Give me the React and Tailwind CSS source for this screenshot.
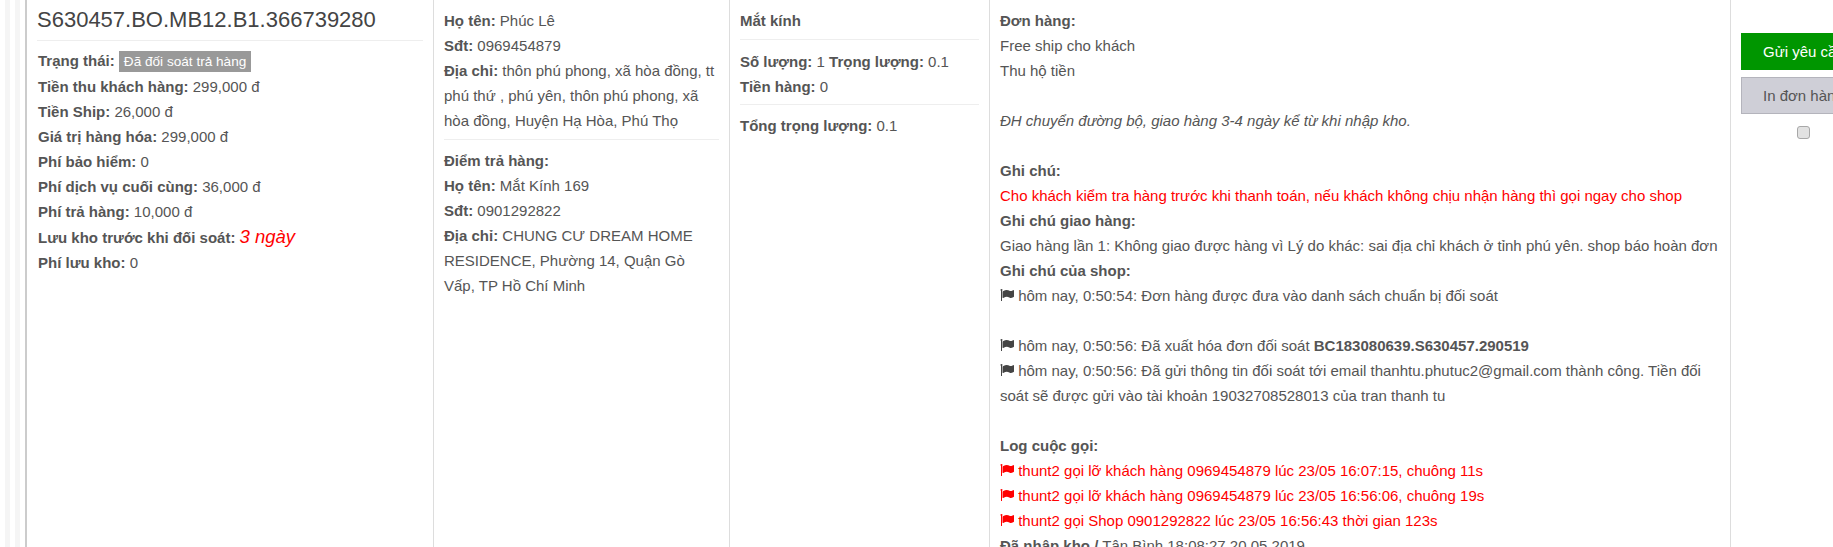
import React from "react";

// one bold label + value line
function Row({ label, children }) {
  return (
    <div>
      <b className="font-bold">{label}</b> {children}
    </div>
  );
}

// old font-awesome flag, thin pole and waving cloth
function FlagIcon({ className }) {
  return (
    <svg viewBox="0 0 1792 1792" fill="currentColor" className={className}>
      <path d="M320 256q0 72-64 110v1266q0 13-9.5 22.5t-22.5 9.5h-64q-13 0-22.5-9.5t-9.5-22.5v-1266q-64-38-64-110 0-53 37.5-90.5t90.5-37.5 90.5 37.5 37.5 90.5zm1472 64v763q0 25-12.5 38.5t-39.5 27.5q-215 116-369 116-61 0-123.5-22t-108.5-48-115.5-48-142.5-22q-192 0-464 146-17 9-33 9-26 0-45-19t-19-45v-742q0-32 31-55 21-14 79-43 236-120 421-120 107 0 200 29t219 88q38 19 88 19 54 0 117.5-21t110-47 88-47 54.5-21q26 0 45 19t19 45z" />
    </svg>
  );
}

function FlagLine({ children, red }) {
  return (
    <div className={red ? "text-[#ff0000]" : ""}>
      <FlagIcon className={`inline-block w-[14px] h-[14px] align-[-1px] ${red ? "text-[#ff0000]" : "text-[#444]"}`} /> {children}
    </div>
  );
}

const Hr = ({ className = "" }) => <div className={`border-t border-[#eeeeee] ${className}`} />;

export default function App() {
  return (
    <div
      className="w-[1833px] h-[547px] overflow-hidden bg-white text-[15px] leading-[25px] text-[#555]"
      style={{ fontFamily: '"Liberation Sans", Arial, sans-serif' }}
    >
      <div className="flex w-[1900px] h-full">
        {/* nested row borders on the left */}
        <div className="w-[25px] shrink-0 h-full bg-[repeating-linear-gradient(90deg,#ffffff_0px,#ffffff_5px,#f5f5f5_5px,#f5f5f5_10px)]" />

        <div className="w-[409px] shrink-0 border-l-2 border-[#cccccc] border-r border-r-[#dddddd] pl-[10px] pr-[10px]">
          <h3 className="text-[22px] leading-[24px] pt-[8px] pb-[8px] text-[#444] border-b border-[#eeeeee] font-normal">
            S630457.BO.MB12.B1.366739280
          </h3>
          <div className="pt-[7px] pl-[1px]">
            <div>
              <b className="font-bold">Trạng thái:</b>{" "}
              <span className="bg-[#999999] text-white text-[13.6px] px-[5px] py-[3px]">Đã đối soát trả hàng</span>
            </div>
            <Row label="Tiền thu khách hàng:">299,000 đ</Row>
            <Row label="Tiền Ship:">26,000 đ</Row>
            <Row label="Giá trị hàng hóa:">299,000 đ</Row>
            <Row label="Phí bảo hiểm:">0</Row>
            <Row label="Phí dịch vụ cuối cùng:">36,000 đ</Row>
            <Row label="Phí trả hàng:">10,000 đ</Row>
            <Row label="Lưu kho trước khi đối soát:">
              <i className="text-[#ff0000] text-[18.5px]">3 ngày</i>
            </Row>
            <Row label="Phí lưu kho:">0</Row>
          </div>
        </div>

        <div className="w-[296px] shrink-0 border-r border-[#dddddd] px-[10px] pt-[8px]">
          <Row label="Họ tên:">Phúc Lê</Row>
          <Row label="Sđt:">0969454879</Row>
          <Row label="Địa chỉ:">thôn phú phong, xã hòa đồng, tt phú thứ , phú yên, thôn phú phong, xã hòa đồng, Huyện Hạ Hòa, Phú Thọ</Row>
          <Hr className="mt-[6px] mb-[8px]" />
          <div><b className="font-bold">Điểm trả hàng:</b></div>
          <Row label="Họ tên:">Mắt Kính 169</Row>
          <Row label="Sđt:">0901292822</Row>
          <Row label="Địa chỉ:">CHUNG CƯ DREAM HOME RESIDENCE, Phường 14, Quận Gò Vấp, TP Hồ Chí Minh</Row>
        </div>

        <div className="w-[260px] shrink-0 border-r border-[#dddddd] px-[10px] pt-[8px]">
          <div className="font-bold">Mắt kính</div>
          <Hr className="mt-[6px] mb-[9px]" />
          <div>
            <b className="font-bold">Số lượng:</b> 1 <b className="font-bold">Trọng lượng:</b> 0.1
          </div>
          <Row label="Tiền hàng:">0</Row>
          <Hr className="mt-[5px] mb-[8px]" />
          <Row label="Tổng trọng lượng:">0.1</Row>
        </div>

        <div className="w-[741px] shrink-0 border-r border-[#dddddd] px-[10px] pt-[8px]">
          <div className="font-bold">Đơn hàng:</div>
          <div>Free ship cho khách</div>
          <div>Thu hộ tiền</div>
          <br />
          <div className="italic">ĐH chuyển đường bộ, giao hàng 3-4 ngày kể từ khi nhập kho.</div>
          <br />
          <div className="font-bold">Ghi chú:</div>
          <div className="text-[#ff0000]">Cho khách kiểm tra hàng trước khi thanh toán, nếu khách không chịu nhận hàng thì gọi ngay cho shop</div>
          <div className="font-bold">Ghi chú giao hàng:</div>
          <div>Giao hàng lần 1: Không giao được hàng vì Lý do khác: sai địa chỉ khách ở tỉnh phú yên. shop báo hoàn đơn</div>
          <div className="font-bold">Ghi chú của shop:</div>
          <FlagLine>hôm nay, 0:50:54: Đơn hàng được đưa vào danh sách chuẩn bị đối soát</FlagLine>
          <br />
          <FlagLine>
            hôm nay, 0:50:56: Đã xuất hóa đơn đối soát <b className="font-bold">BC183080639.S630457.290519</b>
          </FlagLine>
          <FlagLine>
            hôm nay, 0:50:56: Đã gửi thông tin đối soát tới email thanhtu.phutuc2@gmail.com thành công. Tiền đối soát sẽ được gửi vào tài khoản 19032708528013 của tran thanh tu
          </FlagLine>
          <br />
          <div className="font-bold">Log cuộc gọi:</div>
          <FlagLine red>thunt2 gọi lỡ khách hàng 0969454879 lúc 23/05 16:07:15, chuông 11s</FlagLine>
          <FlagLine red>thunt2 gọi lỡ khách hàng 0969454879 lúc 23/05 16:56:06, chuông 19s</FlagLine>
          <FlagLine red>thunt2 gọi Shop 0901292822 lúc 23/05 16:56:43 thời gian 123s</FlagLine>
          <div>
            <b className="font-bold">Đã nhập kho /</b> Tân Bình 18:08:27 20.05.2019
          </div>
        </div>

        <div className="w-[146px] shrink-0 pl-[10px] pt-[33px] flex flex-col items-start">
          <button className="w-[124px] h-[37px] bg-[#009600] text-white pl-[22px] text-left whitespace-nowrap overflow-hidden">
            Gửi yêu cầu trả hàng
          </button>
          <button className="w-[124px] h-[37px] mt-[7px] bg-[#cfcfd7] border border-[#b4b4bc] text-[#555] pl-[21px] text-left whitespace-nowrap">
            In đơn hàng
          </button>
          <input
            type="checkbox"
            className="appearance-none w-[13px] h-[13px] mt-[12px] ml-[56px] bg-[#e2e2e2] border border-[#a8a8a8] rounded-[3px]"
          />
        </div>
      </div>
    </div>
  );
}
